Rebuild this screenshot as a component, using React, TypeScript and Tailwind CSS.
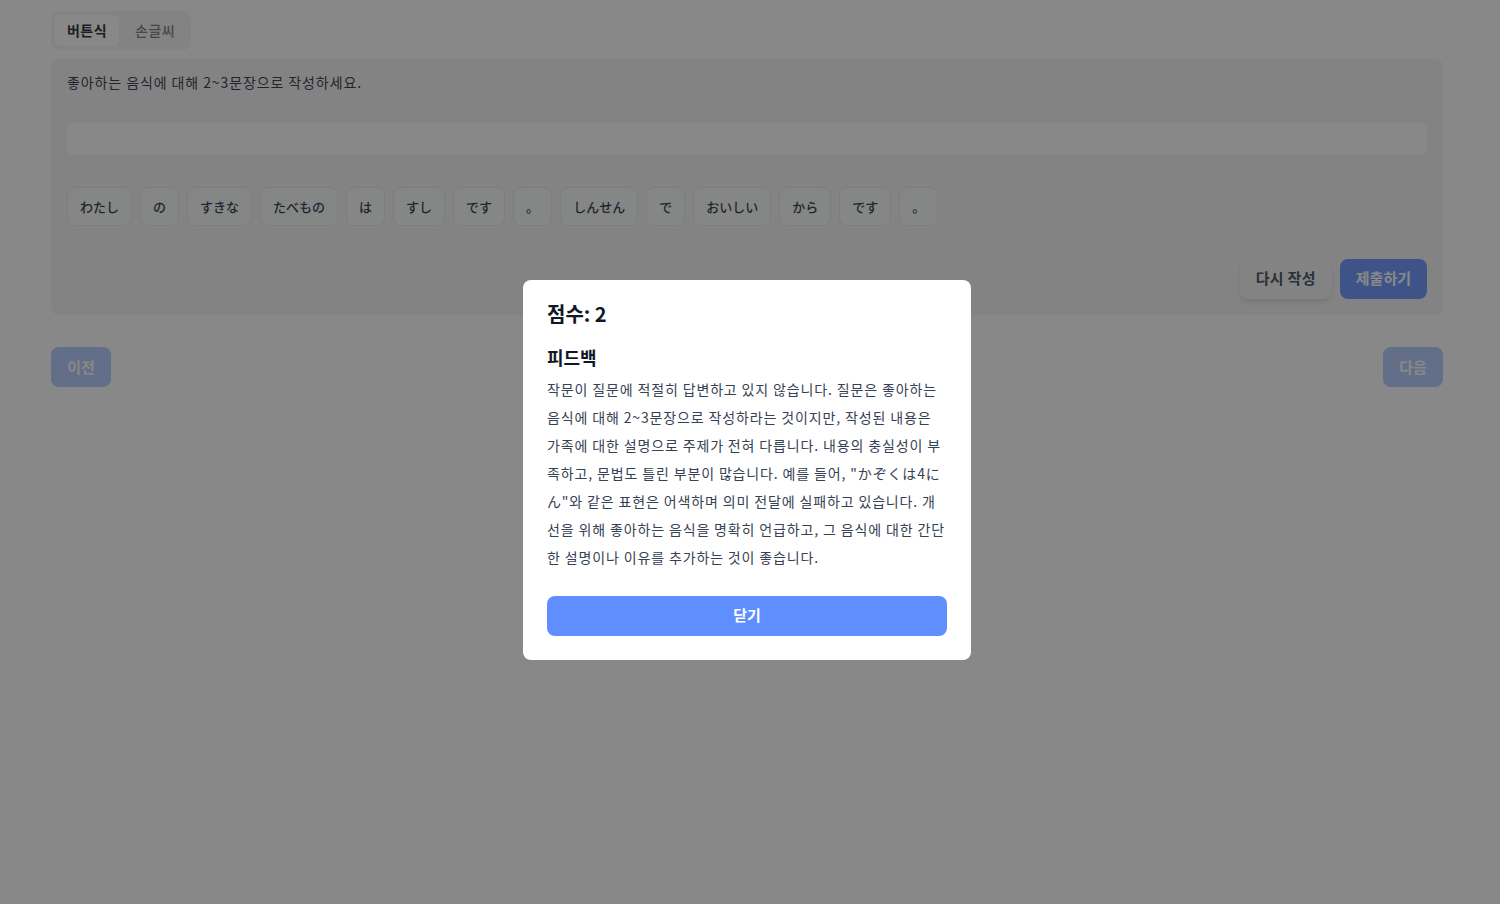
import { useState } from "react";

const words = [
  "わたし",
  "の",
  "すきな",
  "たべもの",
  "は",
  "すし",
  "です",
  "。",
  "しんせん",
  "で",
  "おいしい",
  "から",
  "です",
  "。",
];

const feedback =
  '작문이 질문에 적절히 답변하고 있지 않습니다. 질문은 좋아하는 음식에 대해 2~3문장으로 작성하라는 것이지만, 작성된 내용은 가족에 대한 설명으로 주제가 전혀 다릅니다. 내용의 충실성이 부족하고, 문법도 틀린 부분이 많습니다. 예를 들어, "かぞくは4にん"와 같은 표현은 어색하며 의미 전달에 실패하고 있습니다. 개선을 위해 좋아하는 음식을 명확히 언급하고, 그 음식에 대한 간단한 설명이나 이유를 추가하는 것이 좋습니다.';

export default function App() {
  const [mode, setMode] = useState<"button" | "hand">("button");
  const [open, setOpen] = useState(true);

  return (
    <div
      className="min-h-[904px] bg-white"
      style={{ fontFamily: '"Noto Sans CJK KR", "Noto Sans CJK JP", "Noto Sans", sans-serif' }}
    >
      <div className="ml-[51px] w-[1392px] pt-[11px]">
        {/* mode tabs */}
        <div className="inline-flex gap-1 rounded-lg bg-gray-100 p-1 tracking-[0.03em]">
          <button
            onClick={() => setMode("button")}
            className={`rounded-md px-3 py-[5px] text-[14px] font-semibold ${
              mode === "button" ? "bg-white text-gray-900" : "text-gray-500"
            }`}
          >
            버튼식
          </button>
          <button
            onClick={() => setMode("hand")}
            className={`rounded-md px-3 py-[5px] text-[14px] font-medium ${
              mode === "hand" ? "bg-white text-gray-900" : "text-gray-500"
            }`}
          >
            손글씨
          </button>
        </div>

        {/* question card */}
        <div className="mt-[9px] rounded-lg bg-gray-100 px-4 pt-[12px] pb-4">
          <p className="text-[14px] leading-[22px] tracking-[0.9px] text-gray-800">
            좋아하는 음식에 대해 2~3문장으로 작성하세요.
          </p>

          <div className="mt-[30px] h-8 rounded-md bg-white" />

          <div className="mt-8 flex flex-wrap gap-2">
            {words.map((w, i) => (
              <button
                key={i}
                className="h-[39px] rounded-lg border border-gray-200 bg-gray-50 px-3 text-[13px] font-medium text-gray-800"
                style={{ fontFamily: '"Noto Sans CJK JP", sans-serif' }}
              >
                {w}
              </button>
            ))}
          </div>

          <div className="mt-[33px] flex justify-end gap-2">
            <button className="h-10 rounded-lg bg-gray-100 px-4 pb-[2px] text-[15px] font-semibold tracking-[0.02em] text-gray-700 shadow-md">
              다시 작성
            </button>
            <button className="h-10 rounded-lg bg-[#5f8fff] px-4 pb-[2px] text-[15px] font-semibold text-white">
              제출하기
            </button>
          </div>
        </div>

        {/* navigation */}
        <div className="mt-8 flex justify-between">
          <button className="h-10 w-[60px] rounded-lg bg-[#5f8fff] text-[15px] font-semibold text-white opacity-50">
            이전
          </button>
          <button className="h-10 w-[60px] rounded-lg bg-[#5f8fff] text-[15px] font-semibold text-white opacity-50">
            다음
          </button>
        </div>
      </div>

      {open && (
        <div className="fixed inset-0 flex items-start justify-center bg-[rgba(35,35,35,0.54)] pt-[280px] pr-[6px]">
          <div className="w-[448px] rounded-lg bg-white p-6">
            <h2 className="text-[20px] font-bold leading-[20px] text-gray-900">점수: 2</h2>
            <h3 className="mt-[19px] text-[18px] font-bold leading-[28px] text-gray-900">피드백</h3>
            <p className="mt-1 text-[14px] leading-[28px] tracking-[0.86px] text-gray-700">{feedback}</p>
            <button
              onClick={() => setOpen(false)}
              className="mt-[25px] h-10 w-full rounded-lg bg-[#5f8fff] pb-[2px] text-[15px] font-semibold text-white"
            >
              닫기
            </button>
          </div>
        </div>
      )}
    </div>
  );
}
